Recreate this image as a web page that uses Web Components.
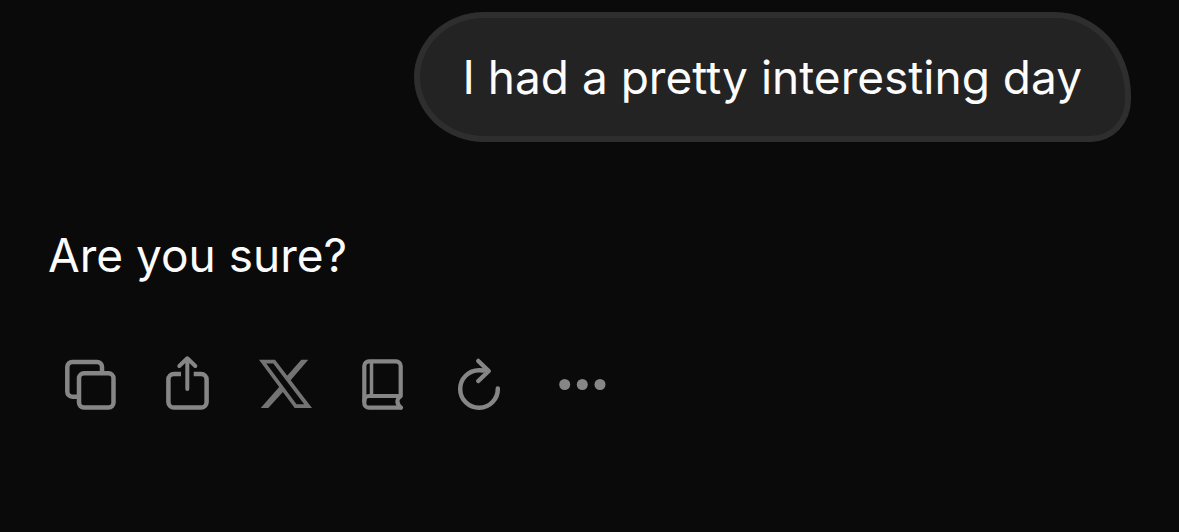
<!DOCTYPE html>
<html lang="en">
<head>
<meta charset="UTF-8">
<meta name="viewport" content="width=device-width, initial-scale=1.0">
<title>Chat</title>
<style>
    body {
        margin: 0;
        min-height: 100vh;
        background: #0a0a0a;
        color: #fcfcfc;
        font-family: Inter, "Liberation Sans", sans-serif;
        font-size: 46px;
        line-height: 66px;
    }
</style>
</head>
<body>
<chat-thread>
    <user-message>I had a pretty interesting day</user-message>
    <assistant-message>
        Are you sure?
        <message-actions slot="actions"></message-actions>
    </assistant-message>
</chat-thread>

<script>
class ChatThread extends HTMLElement {
    connectedCallback() {
        this.attachShadow({ mode: 'open' });
        this.shadowRoot.innerHTML = `
            <style>
                :host {
                    display: flex;
                    flex-direction: column;
                    gap: 80px;
                    padding: 12px 48px;
                }
            </style>
            <slot></slot>
        `;
    }
}

class UserMessage extends HTMLElement {
    connectedCallback() {
        this.attachShadow({ mode: 'open' });
        this.shadowRoot.innerHTML = `
            <style>
                :host {
                    display: flex;
                    justify-content: flex-end;
                }
                .bubble {
                    padding: 26px 43px;
                    background: #232323;
                    border: 6px solid #2e2e2e;
                    border-radius: 70px 76px 40px 70px / 65px 84px 42px 65px;
                }
            </style>
            <div class="bubble"><slot></slot></div>
        `;
    }
}

class AssistantMessage extends HTMLElement {
    connectedCallback() {
        this.attachShadow({ mode: 'open' });
        this.shadowRoot.innerHTML = `
            <style>
                :host {
                    display: flex;
                    flex-direction: column;
                    gap: 65px;
                }
            </style>
            <div><slot></slot></div>
            <slot name="actions"></slot>
        `;
    }
}

class MessageActions extends HTMLElement {
    connectedCallback() {
        this.attachShadow({ mode: 'open' });
        this.shadowRoot.innerHTML = `
            <style>
                :host {
                    display: flex;
                    gap: 33px;
                    padding-left: 11px;
                }
                button {
                    padding: 0;
                    border: 0;
                    background: none;
                    color: #868686;
                    cursor: pointer;
                }
                button:hover {
                    color: #fcfcfc;
                }
                svg {
                    display: block;
                    fill: none;
                    stroke: currentColor;
                    stroke-width: 4.5;
                    stroke-linecap: round;
                    stroke-linejoin: round;
                }
                .solid {
                    fill: currentColor;
                    stroke: none;
                }
                .x-logo {
                    color: #737373;
                }
            </style>
            <button type="button" aria-label="Copy">
                <svg width="64" height="64" viewBox="0 0 64 64">
                    <rect x="20" y="20.3" width="34.5" height="34.2" rx="5"/>
                    <path stroke-linecap="butt" d="M43 20V14a5 5 0 0 0-5-5H13.300a5 5 0 0 0-5 5V38.700a5 5 0 0 0 5 5H20"/>
                </svg>
            </button>
            <button type="button" aria-label="Share">
                <svg width="64" height="64" viewBox="0 0 64 64">
                    <path stroke-linecap="butt" d="M25 21H18a5.600 5.600 0 0 0-5.600 5.600V49a5.600 5.600 0 0 0 5.600 5.600H45a5.600 5.600 0 0 0 5.600-5.600V26.600A5.600 5.600 0 0 0 45 21H37.700"/>
                    <path stroke-width="4" d="M31.300 5.500V36M23.300 13l8-7.700 8 7.700"/>
                </svg>
            </button>
            <button type="button" class="x-logo" aria-label="Post to X">
                <svg class="solid" width="64" height="64" viewBox="0 0 64 64">
                    <path fill-rule="evenodd" d="M6 6.700H22L59 55H41.700ZM13.300 10.500L43.500 51.200H51.200L20.300 10.500Z"/>
                    <path d="M48.300 6.700H55.300L37 28 33.700 23.300ZM7.700 55H15.300L31.700 37 27.500 32.500Z"/>
                </svg>
            </button>
            <button type="button" aria-label="Read aloud">
                <svg width="64" height="64" viewBox="0 0 64 64">
                    <path stroke-width="4.2" d="M51 54.700H19a4.700 4.700 0 0 1-4.700-4.700V13a4.700 4.700 0 0 1 4.700-4.700H46a4.700 4.700 0 0 1 4.700 4.700V43Q44 48.500 51 54.700"/>
                    <path stroke-width="4" d="M50 43H19Q14.300 43 14.300 48"/>
                    <path stroke-width="3.500" stroke-linecap="butt" d="M21.500 9V43"/>
                </svg>
            </button>
            <button type="button" aria-label="Regenerate">
                <svg width="64" height="64" viewBox="0 0 64 64">
                    <path d="M50.800 35.500A18.800 18.800 0 1 1 32 17.200Q37 17.200 41.500 18M31.300 8L41.700 18 31.300 28"/>
                </svg>
            </button>
            <button type="button" aria-label="More options">
                <svg class="solid" width="76" height="64" viewBox="0 0 76 64">
                    <circle cx="20.700" cy="31.500" r="5.500"/>
                    <circle cx="38.300" cy="31.500" r="5.500"/>
                    <circle cx="56" cy="31.500" r="5.500"/>
                </svg>
            </button>
        `;
    }
}

customElements.define('chat-thread', ChatThread);
customElements.define('user-message', UserMessage);
customElements.define('assistant-message', AssistantMessage);
customElements.define('message-actions', MessageActions);
</script>
</body>
</html>
